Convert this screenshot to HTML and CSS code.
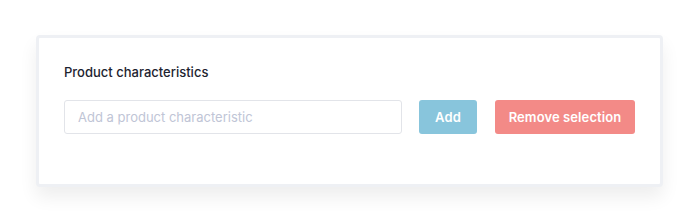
FILE: index.html
```html
<!DOCTYPE html>
<html>
<head>
<meta charset="utf-8">
<link rel="stylesheet" href="styles.css">
</head>
<body>
<div class="page">
  <section class="card">
    <h2 class="title">Product characteristics</h2>
    <div class="row">
      <input class="field" type="text" placeholder="Add a product characteristic">
      <button class="btn btn-add">Add</button>
      <button class="btn btn-remove">Remove selection</button>
    </div>
  </section>
</div>
</body>
</html>
```
FILE: styles.css
```css
html, body {
  margin: 0;
  padding: 0;
  background: #ffffff;
}
body {
  font-family: "Inter", "Open Sans", sans-serif;
  width: 700px;
  height: 224px;
  overflow: hidden;
}
.page {
  padding: 35px 0 0 36px;
}
.card {
  box-sizing: border-box;
  width: 627px;
  height: 152px;
  border: 3px solid #eef0f4;
  border-radius: 4px;
  background: #ffffff;
  box-shadow: 0 10px 18px rgba(0, 0, 0, 0.07);
  padding: 26px 25px 0 25px;
}
.title {
  margin: 0;
  font-size: 13px;
  font-weight: 500;
  color: #1d2330;
  line-height: 16px;
}
.row {
  display: flex;
  margin-top: 20px;
}
.field {
  box-sizing: border-box;
  width: 338px;
  height: 34px;
  border: 1px solid #e2e4e9;
  border-radius: 3px;
  padding: 0 13px;
  font-family: inherit;
  font-size: 13px;
  color: #333;
  outline: none;
}
.field::placeholder {
  color: #c0c5d6;
}
.btn {
  box-sizing: border-box;
  height: 34px;
  border: none;
  border-radius: 3px;
  color: #ffffff;
  font-family: inherit;
  font-size: 13px;
  font-weight: 600;
  letter-spacing: 0.1px;
  padding: 0;
}
.btn-add {
  width: 58px;
  margin-left: 17px;
  background: #88c5dc;
}
.btn-remove {
  width: 140px;
  margin-left: 18px;
  background: #f38a87;
}
```
